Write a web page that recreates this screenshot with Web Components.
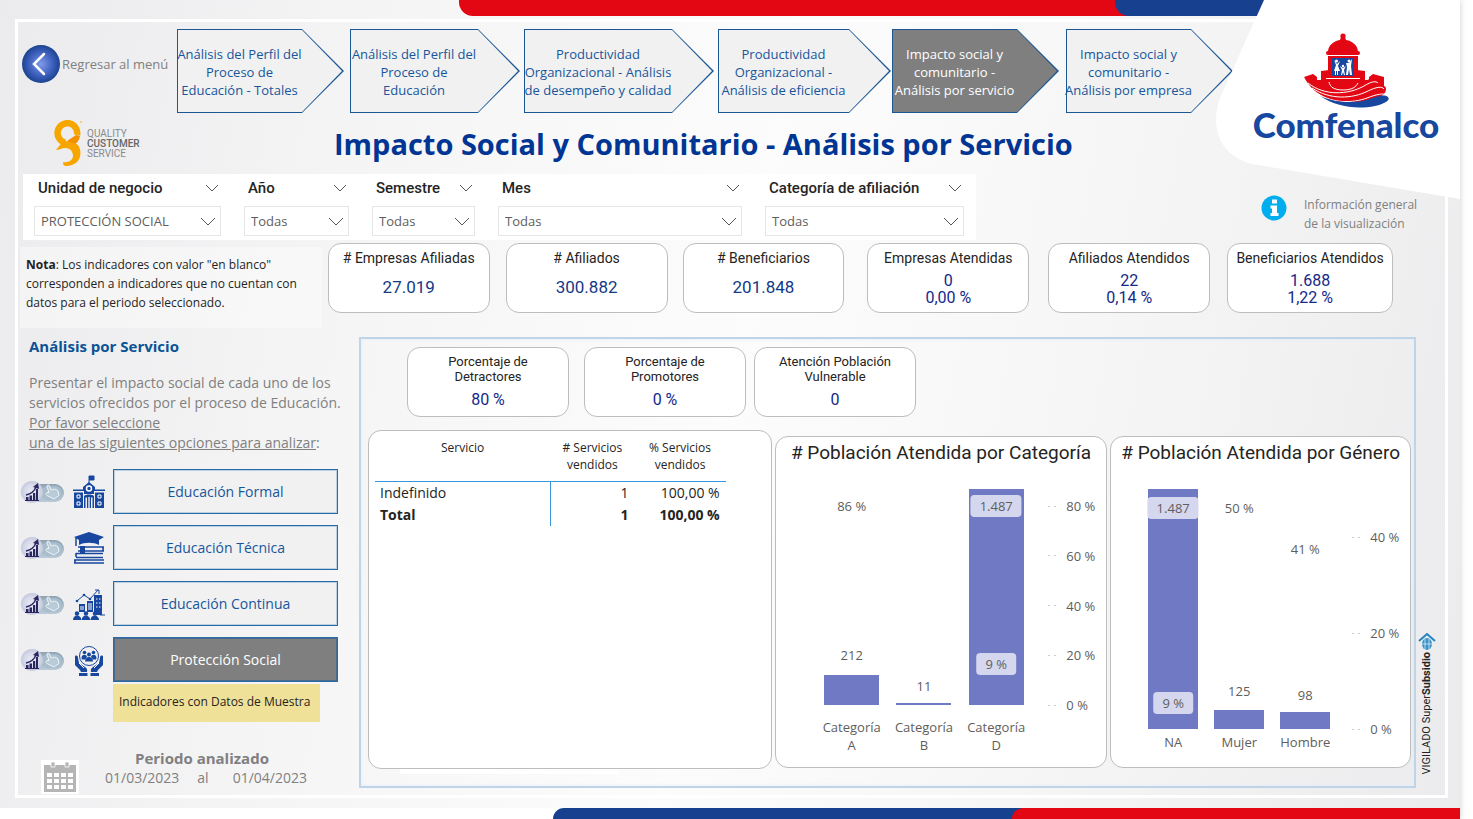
<!DOCTYPE html>
<html lang="es">
<head>
<meta charset="utf-8">
<title>Impacto Social y Comunitario - Análisis por Servicio</title>
<style>
  html, body { margin: 0; padding: 0; background: #fff; }
  body { font-family: "Open Sans", "Noto Sans", sans-serif; color: #252423; }
</style>
</head>
<body>
<impact-dashboard></impact-dashboard>

<script>
const BASE = `*{box-sizing:border-box}:host([hidden]){display:none}`;
function define(name, css, html) {
  customElements.define(name, class extends HTMLElement {
    constructor() {
      super();
      const root = this.attachShadow({ mode: 'open' });
      const markup = typeof html === 'function' ? html(this) : html;
      root.innerHTML = `<style>${BASE}${css}</style>${markup}`;
    }
  });
}

/* ---------- Brand ---------- */
define('brand-corner', `
  :host{display:block;width:244px;height:200px}
  svg.bg{display:block;width:244px;height:200px}
  .mark{position:absolute;left:74px;top:25px}
  .name{position:absolute;left:0;right:0;top:102px;padding-left:16px;text-align:center;font:900 35px/44px Lato,sans-serif;color:#17479e}
`, `
  <svg class="bg" viewBox="0 0 244 200" aria-hidden="true">
    <path d="M48 0H244V199L42 165C8 160 -8 132 4 98Z" fill="#fff"/>
  </svg>
  <svg class="mark" width="110" height="90" viewBox="0 0 110 90" aria-hidden="true">
    <g fill="#e30613">
      <circle cx="53" cy="11" r="2.6"/>
      <path d="M51 12h4l1 3c7 1 12 6 12 12H38c0-6 5-11 12-12z"/>
      <rect x="36" y="26" width="34" height="4" rx="2"/>
      <path d="M38 31h30v22H38z"/>
      <path d="M14 52l9-3 4 3v3h4V46l8-1v8h28v-8l8 1v9h4v-3l4-3 11 3v11L60 74 30 66z"/>
      <path d="M14 52c10 9 30 13 46 9 12-3 20-9 27-7 2 4-2 8-7 10 6-3 16-6 16 0 0 8-14 14-38 14C34 77 20 64 14 52z"/>
    </g>
    <path d="M42 33h22v18H42z" fill="#17479e"/>
    <g fill="#fff">
      <circle cx="46.500" cy="36" r="1.500"/><path d="M44 35l3 4 3-3-2 5 2 5h-2v4h-1v-4h-1v4h-1v-4h-1l2-6z"/>
      <circle cx="53" cy="41" r="1.200"/><path d="M50 41l3 2 3-2-2 4 1 5h-1l-1-3-1 3h-1l1-5z"/>
      <circle cx="59" cy="36" r="1.500"/><path d="M56 38l3 0 3-4-1 7 1 9h-2l-1-6-1 6h-2l1-8z"/>
    </g>
    <g fill="none" stroke="#fff">
      <path d="M37 30.500h32M36 53.500h34"/>
      <path d="M39 57c1 5 5 8 14 8s13-3 15-7" />
      <path d="M18 58c16 13 40 12 56 3 8-5 12-5 14-3"/>
      <path d="M22 63c18 12 40 11 56 3 8-4 14-5 16-2"/>
      <path d="M27 68c16 11 36 10 50 5 10-4 17-5 19-3"/>
    </g>
    <path d="M30 71c18 8 38 7 50 3 8-3 14-5 18-2 3 3-4 7-13 9-20 4-40 0-55-10z" fill="#17479e"/>
  </svg>
  <div class="name">Comfenalco</div>
`);

define('quality-seal', `
  :host{display:flex;align-items:center;gap:5px;font:10px/10px Roboto,sans-serif;color:#8a8a8a}
  b{font-weight:500;color:#666}
`, `
  <svg width="28" height="47" viewBox="0 0 28 47" aria-hidden="true">
    <path d="M11 22.500A9.800 9.800 0 1 1 23 15" fill="none" stroke="#f7a600" stroke-width="6.500"/>
    <path d="M22 15l4 1c-1 6-5 9-9 10l-4-5z" fill="#f39200"/>
    <path d="M2 30l8-10c5 3 10 2 14 5 5 7 3 21-12 21-2 0-3-1-3-4 5 1 10-2 10-6 0-5-3-8-8-8-3 0-6 2-9 2z" fill="#f7a600"/>
    <circle cx="27" cy="2" r="1" fill="#f9c65c"/>
  </svg>
  <div>QUALITY<br><b>CUSTOMER</b><br>SERVICE</div>
`);

/* ---------- Navigation ---------- */
define('back-link', `
  :host{display:block}
  a{display:flex;align-items:center;gap:2px;color:#808080;font-size:13px;line-height:18px;text-decoration:none;white-space:nowrap}
  svg{flex:none}
`, `
  <a href="#menu">
    <svg width="38" height="38" viewBox="0 0 38 38" aria-hidden="true">
      <defs><radialGradient id="g"><stop offset="0" stop-color="#7f9aea"/><stop offset=".6" stop-color="#3f62c0"/><stop offset="1" stop-color="#1b4290"/></radialGradient></defs>
      <circle cx="19" cy="19" r="19" fill="url(#g)"/>
      <path d="M22 9L12 19l10 10" fill="none" stroke="#fff" stroke-width="2.500" stroke-linecap="round"/>
    </svg>
    <slot></slot>
  </a>
`);

define('step-arrow', `
  :host{display:block;--tip:42px;--fill:#f1f1f2;color:#17569a}
  :host([current]){--fill:#7f7f7f;color:#fff}
  a{display:grid;height:84px;color:inherit;text-decoration:none}
  a>*{grid-area:1/1;min-width:0}
  .edge{background:#1a5794;clip-path:polygon(0 0,calc(100% - var(--tip)) 0,100% 50%,calc(100% - var(--tip)) 100%,0 100%)}
  .fill{background:var(--fill);clip-path:polygon(1px 1px,calc(100% - var(--tip)) 1px,calc(100% - 2px) 50%,calc(100% - var(--tip)) calc(100% - 1px),1px calc(100% - 1px))}
  .text{position:relative;display:flex;flex-direction:column;align-items:center;justify-content:center;padding:2px var(--tip) 0 0;
    text-align:center;white-space:nowrap;font-size:13px;line-height:18px}
`, `<a href="#paso"><span class="edge"></span><span class="fill"></span><span class="text"><span><slot></slot></span></span></a>`);

/* ---------- Filters ---------- */
define('filter-box', `
  :host{display:block;background:#fff;padding:4px 12px 6px 11px;height:66px}
  .head{display:flex;align-items:center;justify-content:space-between;height:20px;padding:0 2px 0 4px;margin-bottom:8px}
  label{font:500 15px/20px Roboto,sans-serif;color:#252423;white-space:nowrap}
  button{border:0;background:none;padding:0;height:14px;line-height:0}
  .box{display:grid;height:30px}
  select{grid-area:1/1;appearance:none;border:1px solid #e6e6e6;border-radius:0;background:#fff;padding:0 6px;font:13px/20px "Open Sans",sans-serif;color:#605e5c;width:100%;min-width:0}
  .box svg{grid-area:1/1;justify-self:end;align-self:center;margin-right:5px;pointer-events:none}
`, el => `
  <div class="head"><label for="s">${el.getAttribute('label')}</label>
  <button type="button" aria-label="Contraer"><svg width="14" height="8" viewBox="0 0 14 8"><path d="M1 1l6 6 6-6" fill="none" stroke="#555"/></svg></button></div>
  <div class="box"><select id="s"><option>${el.getAttribute('value')}</option></select>
  <svg width="16" height="9" viewBox="0 0 16 9"><path d="M1 1l7 7 7-7" fill="none" stroke="#555"/></svg></div>
`);

define('info-note', `
  :host{display:flex;gap:17px;align-items:flex-start;color:#808080;font-size:12px;line-height:19px;white-space:nowrap}
  svg{flex:none}
`, `
  <svg width="26" height="26" viewBox="0 0 26 26" aria-hidden="true"><circle cx="13" cy="13" r="12.500" fill="#00aeef"/>
  <path d="M11 4.500h5v4h-5zM9.500 10.500H16V18h1.500v3h-8v-3H11v-4.500H9.500z" fill="#fff"/></svg>
  <div><slot></slot></div>
`);

/* ---------- Indicators ---------- */
define('kpi-card', `
  :host{display:flex;flex-direction:column;align-items:center;height:70px;padding-top:6px;background:#fff;border:1px solid #bdbdbd;border-radius:13px;
    text-align:center;font:14px/16px Roboto,sans-serif;white-space:nowrap}
  .v{color:#15298a;font-size:16px;line-height:17px;padding-top:6px}
  :host([single]) .v{font-size:17px;line-height:20px;padding-top:11px;color:#123a86}
  :host([compact]) .t{font-size:13px;line-height:15px}
  :host([compact]) .v{padding-top:7px}
`, `<div class="t"><slot name="title"></slot></div><div class="v"><slot></slot></div>`);

/* ---------- Sidebar ---------- */
define('mode-toggle', `
  :host{display:block;width:44px;height:24px}
`, `
  <svg width="44" height="24" viewBox="0 0 44 24" aria-hidden="true">
    <defs>
      <radialGradient id="a"><stop offset="0" stop-color="#ededf8"/><stop offset=".7" stop-color="#d5d8ea"/><stop offset="1" stop-color="#c3c8dc"/></radialGradient>
      <linearGradient id="b" x2="0" y2="1"><stop offset="0" stop-color="#8ea3b3"/><stop offset="1" stop-color="#b8cbd9"/></linearGradient>
    </defs>
    <rect x="8" y="4" width="35" height="18" rx="9" fill="url(#b)"/>
    <rect x="20" y="6" width="21" height="14" rx="7" fill="#a9bdcb"/>
    <circle cx="11" cy="12" r="11" fill="url(#a)"/>
    <path d="M5 20v-3h2.500v3zM8.500 20v-4.500H11V20zM12 20v-7h2.200v7zM15 20V9h2v11z" fill="#29275e"/>
    <path d="M5 15c5-1 8-3 10-8" fill="none" stroke="#29275e" stroke-width="1.500"/><path d="M12 7l5-4 1 6z" fill="#29275e"/><path d="M4 20.500h14" stroke="#29275e"/>
    <path d="M28 12.500l-2-6c0-2 2-2 2.500-.5l1.500 4c2-1.500 6-1 7 1l1 4.500-5 3.500-6-3c-2-1-3-2-1-3.500z" fill="#b9cbd8" stroke="#edf4f9" stroke-width="1"/>
  </svg>
`);

const SERVICE_ICONS = {
  school: `<path d="M16 1v7M16 1h5v4h-5" fill="#17479e" stroke="#17479e" stroke-width="1"/>
    <path d="M16 7l6 5v3H10v-3zM0 14.500h32V16H0zM1 17.500h9V33H1zM22 17.500h9V33h-9zM11 15h10v4H11zM11 21c2-2 8-2 10 0v12h-1.500V22.500h-1.500V33h-1.300V22h-1.400v11H14V22.500h-1.500V33H11z" fill="#17479e"/>
    <circle cx="16" cy="13.500" r="2.500" fill="#17479e" stroke="#fff" stroke-width="1.500"/>
    <path d="M4 20h3v3H4zM4 27h3v3H4zM25 20h3v3h-3zM25 27h3v3h-3z" fill="#17479e" stroke="#fff"/>`,
  books: `<path d="M1 6l15-5 15 5-5 3v5c-5-3-15-3-20 0V9z" fill="#17479e"/><path d="M3 7v8" stroke="#17479e" stroke-width="1.500"/>
    <path d="M5 16h26M5 20h26M30 16v4M3 22.500h27M3 26.500h27M3 22v4M1 29h30M1 32h30M2 29v3" stroke="#17479e" stroke-width="1.600" fill="none"/>
    <path d="M7 15h5v8l-2-1-3 1z" fill="#17479e"/>`,
  growth: `<path d="M4 14l7-6 6 4 8-9" fill="none" stroke="#17479e"/><path d="M22 3h4v4" fill="none" stroke="#17479e"/><circle cx="4" cy="14" r="1.300" fill="#17479e"/><circle cx="11" cy="8" r="1.300" fill="#17479e"/><circle cx="17" cy="12" r="1.300" fill="#17479e"/>
    <path d="M6 17h6v8H6zM14 14h6v11h-6zM21 8h8v20h-8z" fill="#17479e"/><path d="M8 19v4M10 19v4M16 16v7M18 16v7M23 12h1.500M26 12h1.500M23 16h1.500M26 16h1.500M23 20h1.500M26 20h1.500" stroke="#fff"/>
    <path d="M0 33c0-6 8-6 8.500 0M8.800 33c0-6 8-6 8.500 0M17.600 33c0-6 8-6 8.500 0" fill="#17479e"/><circle cx="4" cy="26.500" r="2.200" fill="#17479e"/><circle cx="13" cy="26.500" r="2.200" fill="#17479e"/><circle cx="22" cy="26.500" r="2.200" fill="#17479e"/><path d="M27 28h5" stroke="#17479e"/>`,
  care: `<circle cx="16" cy="13" r="9.500" fill="none" stroke="#17479e"/>
    <g fill="#17479e"><circle cx="11.500" cy="9.500" r="1.800"/><circle cx="20.500" cy="9.500" r="1.800"/><circle cx="16" cy="11.500" r="2"/><path d="M8.500 15c0-4 5-4 5.500-1l-2 2.500H9zM23.500 15c0-4-5-4-5.500-1l2 2.500h3zM12 18.500c0-6 8-6 8 0z"/>
    <path d="M2 13c2-1 3 0 3 2l1 5 6 4c3 2 2 4 2 5H8l-1-2-5-5zM30 13c-2-1-3 0-3 2l-1 5-6 4c-3 2-2 4-2 5h6l1-2 5-5zM6 30h8.500v3H6zM17.500 30H26v3h-8.500z"/></g>
    <path d="M6 20l5 5M26 20l-5 5" stroke="#fff"/>`
};

define('service-option', `
  :host{display:grid;grid-template-columns:44px 34px 1fr;align-items:center;column-gap:7px;--c:#17569a;--fill:#f1f1f2}
  :host([current]){--fill:#7f7f7f;--c:#fff}
  .i{justify-self:center;line-height:0}
  button{height:45px;border:1px solid #2a6aa5;outline:1px solid #b8cfe4;outline-offset:-2px;background:var(--fill);color:var(--c);font:14px/20px "Open Sans",sans-serif;padding:0;width:100%}
  :host([current]) button{outline-color:#456b90}
`, el => `
  <mode-toggle></mode-toggle>
  <svg class="i" width="32" height="34" viewBox="0 0 32 34" aria-hidden="true">${SERVICE_ICONS[el.getAttribute('icon')]}</svg>
  <button type="button"><slot></slot></button>
`);

define('analysis-period', `
  :host{display:flex;align-items:flex-end;gap:26px;color:#808080}
  .cal{flex:none;background:#fff;line-height:0;padding:2px}
  .t{font:700 15px/20px "Open Sans",sans-serif;text-align:center;padding-right:8px}
  .d{display:flex;gap:18px;font-size:14px;line-height:20px;padding-bottom:6px}
  .to{padding-left:6px}
`, `
  <div class="cal"><svg width="34" height="30" viewBox="0 0 34 30" aria-hidden="true">
    <path d="M1 3h32v27H1z" fill="#b5b5b5"/><path d="M8 0h4v5H8zM22 0h4v5h-4z" fill="#b5b5b5" stroke="#fff" stroke-width=".8"/>
    <path d="M4 11h5v4H4zM11 11h5v4h-5zM18 11h5v4h-5zM25 11h5v4h-5zM4 17h5v4H4zM11 17h5v4h-5zM18 17h5v4h-5zM25 17h5v4h-5zM4 23h5v4H4zM11 23h5v4h-5zM18 23h5v4h-5zM25 23h5v4h-5z" fill="#fff"/>
  </svg></div>
  <div><div class="t">Periodo analizado</div><div class="d"><span>01/03/2023</span><span>al</span><span class="to">01/04/2023</span></div></div>
`);

/* ---------- Table ---------- */
define('service-table', `
  :host{display:block;background:#fff;border:1px solid #bdbdbd;border-radius:13px;padding:7px 6px;height:339px}
  table{border-collapse:collapse;width:90%;table-layout:fixed;color:#252423}
  col.a{width:50%}col.b{width:24%}
  th{font-size:12px;line-height:17px;font-weight:400;vertical-align:top;padding:1px 0 8px;height:43px;border-bottom:1px solid #3a96dd}
  td{font-size:14px;line-height:22px;padding:0 6px 0 5px;text-align:right}
  td:first-child{text-align:left;border-right:1px solid #3a96dd}
  tfoot td{font-weight:700}
`, `
  <table>
    <colgroup><col class="a"><col class="b"><col></colgroup>
    <thead><tr><th scope="col">Servicio</th><th scope="col"># Servicios<br>vendidos</th><th scope="col">% Servicios<br>vendidos</th></tr></thead>
    <tbody><tr><td>Indefinido</td><td>1</td><td>100,00 %</td></tr></tbody>
    <tfoot><tr><td>Total</td><td>1</td><td>100,00 %</td></tr></tfoot>
  </table>
`);

/* ---------- Bar chart: data comes from a JSON attribute ---------- */
define('bar-chart', `
  :host{display:block;background:#fff;border:1px solid #bdbdbd;border-radius:13px;height:332px;padding-top:5px}
  h2{margin:0 0 25px;font:400 19px/22px Roboto,sans-serif;color:#252423;text-align:center;white-space:nowrap}
  .body{display:grid;font-size:13px;line-height:18px;color:#605e5c}
  .plot{position:relative;display:grid;grid-auto-flow:column;grid-auto-columns:1fr;justify-items:center;align-items:end}
  .col{position:relative;width:76%;height:100%;display:flex;align-items:flex-end}
  .bar{width:100%;background:#7079c4}
  .lab{position:absolute;left:50%;transform:translate(-50%,50%);white-space:nowrap}
  .pill{background:#d5d7ee;border-radius:4px;padding:2px 9px}
  .axis{position:relative}
  .tick{position:absolute;left:0;transform:translateY(50%);display:flex;gap:9px;white-space:nowrap}
  .tick::before{content:"";width:9px;height:1px;align-self:center;background:linear-gradient(90deg,#ccc 2px,transparent 2px 6px,#ccc 6px 8px,transparent 8px)}
  .cats{display:grid;grid-auto-flow:column;grid-auto-columns:1fr;text-align:center;padding-top:var(--cat-gap)}
`, el => {
  const d = JSON.parse(el.getAttribute('data'));
  const cols = d.bars.map(b => `<div class="col"><div class="bar" style="height:${b.h}%"></div>${
    b.labels.map(l => `<span class="lab ${l.pill ? 'pill' : ''}" style="bottom:${l.at}%">${l.text}</span>`).join('')}</div>`).join('');
  const ticks = d.ticks.map(t => `<div class="tick" style="bottom:${t.at}%">${t.text}</div>`).join('');
  return `<h2>${d.title}</h2>
  <div class="body" style="grid-template-columns:${d.columns};grid-template-rows:${d.plot}px auto;--cat-gap:${d.gap}px">
    <span></span><div class="plot">${cols}</div><span></span><div class="axis">${ticks}</div>
    <span></span><div class="cats">${d.bars.map(b => `<div>${b.name}</div>`).join('')}</div>
  </div>`;
});

/* ---------- Supervision seal ---------- */
define('supervision-seal', `
  :host{display:flex;flex-direction:column;align-items:center;gap:2px}
  .t{writing-mode:vertical-rl;transform:rotate(180deg);font:400 11px/12px Roboto,sans-serif;color:#222;white-space:nowrap}
  b{font-weight:700}
`, `
  <svg width="18" height="18" viewBox="0 0 18 18" aria-hidden="true"><path d="M1 9l8-7 8 7" fill="none" stroke="#2384c0" stroke-width="2"/>
  <ellipse cx="9" cy="12" rx="5" ry="6" fill="#3c92c8"/><path d="M7 7v11M11 7v11M4 12h10" stroke="#d9ecf7" stroke-width=".8"/></svg>
  <div class="t">VIGILADO Super<b>Subsidio</b></div>
`);

/* ---------- Page ---------- */
const chartCategory = JSON.stringify({
  title: '# Población Atendida por Categoría', plot: 216, gap: 13, columns: '40fr 217fr 16fr 58fr',
  bars: [
    { name: 'Categoría<br>A', h: 14, labels: [{ text: '86 %', at: 92 }, { text: '212', at: 23 }] },
    { name: 'Categoría<br>B', h: 1, labels: [{ text: '11', at: 9 }] },
    { name: 'Categoría<br>D', h: 100, labels: [{ text: '1.487', at: 92, pill: 1 }, { text: '9 %', at: 19, pill: 1 }] }
  ],
  ticks: [[80, 92], [60, 69], [40, 46], [20, 23], [0, 0]].map(([n, at]) => ({ text: n + ' %', at }))
});
const chartGender = JSON.stringify({
  title: '# Población Atendida por Género', plot: 240, gap: 4, columns: '29fr 199fr 14fr 58fr',
  bars: [
    { name: 'NA', h: 100, labels: [{ text: '1.487', at: 92, pill: 1 }, { text: '9 %', at: 11, pill: 1 }] },
    { name: 'Mujer', h: 8, labels: [{ text: '50 %', at: 92 }, { text: '125', at: 16 }] },
    { name: 'Hombre', h: 7, labels: [{ text: '41 %', at: 75 }, { text: '98', at: 14 }] }
  ],
  ticks: [[40, 80], [20, 40], [0, 0]].map(([n, at]) => ({ text: n + ' %', at }))
});

define('impact-dashboard', `
  :host{display:block}
  .page{position:relative;margin-right:13px;min-height:100vh;display:flex;flex-direction:column;
    background:linear-gradient(100deg,#ebebed 0%,#f5f5f6 25%,#fcfcfc 50%,#f6f6f6 72%,#ebebed 100%);box-shadow:0 0 6px #ccc}
  .top{display:grid;grid-template-columns:459fr 656fr 345fr;height:16px}
  .top .r{background:#e30613;border-radius:0 0 0 14px;grid-column:2}
  .top .wrap{background:#e30613}
  .top .b{background:#17418f;border-radius:0 0 0 14px;height:16px}
  .bottom{display:grid;grid-template-columns:553fr 459fr 448fr;height:11px;background:#fff}
  .bottom .b{background:#17418f;border-radius:12px 0 0 0}
  .bottom .wrap{background:#17418f}
  .bottom .r{background:#e30613;height:11px;border-radius:12px 0 0 0}
  brand-corner{position:absolute;right:0;top:0}
  .frame{margin:3px 12px 10px 15px;border:3px solid #fff;flex:1}
  nav{display:grid;grid-template-columns:4fr 155fr 167fr 6fr 170fr 4fr 190fr 4fr 173fr 1fr 167fr 7fr 167fr 212fr;padding-top:7px;height:91px}
  nav>*{grid-row:1;min-width:0}
  nav>:nth-child(1){grid-column:2}
  nav>:nth-child(2){grid-column:3}
  nav>:nth-child(3){grid-column:5}
  nav>:nth-child(4){grid-column:7}
  nav>:nth-child(5){grid-column:9}
  nav>:nth-child(6){grid-column:11}
  nav>:nth-child(7){grid-column:13}
  nav back-link{padding-top:16px}
  .title{display:flex;align-items:center;height:61px;padding:0 178px 0 36px}
  h1{flex:1;margin:0;text-align:center;font-size:29px;line-height:36px;font-weight:700;color:#003594;white-space:nowrap}
  .filters{display:grid;grid-template-columns:5fr 210fr 128fr 126fr 267fr 222fr 285fr 184fr}
  .filters filter-box:first-child{grid-column:2}
  info-note{grid-column:8;padding-top:21px}
  .kpis{display:grid;grid-template-columns:310fr 162fr 16fr 162fr 15fr 162fr 23fr 162fr 19fr 162fr 17fr 166fr 52fr;padding-top:3px;height:97px;align-items:start}
  .kpis>*{grid-row:1;min-width:0}
  .kpis>:nth-child(2){grid-column:2}
  .kpis>:nth-child(3){grid-column:4}
  .kpis>:nth-child(4){grid-column:6}
  .kpis>:nth-child(5){grid-column:8}
  .kpis>:nth-child(6){grid-column:10}
  .kpis>:nth-child(7){grid-column:12}
  .note{margin:4px 6px 0 2px;padding:8px 6px;height:81px;background:rgba(255,255,255,.4);font-size:12px;line-height:19px;white-space:nowrap}
  .main{display:grid;grid-template-columns:minmax(0,341fr) minmax(0,1057fr) minmax(0,29fr);min-height:458px}
  aside{padding:0 21px 0 3px;display:flex;flex-direction:column}
  aside h2{margin:0 0 18px 8px;font:700 15px/18px "Open Sans",sans-serif;color:#0b5394}
  aside p{margin:0 0 16px 8px;font:14px/20px "Open Sans",sans-serif;color:#808080;white-space:nowrap}
  .opts{display:flex;flex-direction:column;gap:11px}
  .tag{align-self:flex-start;margin:2px 0 0 92px;width:207px;max-width:100%;height:38px;padding:9px 6px;background:#f0e199;font-size:12px;line-height:18px;white-space:nowrap}
  analysis-period{margin:26px 0 0 20px}
  .panel{margin-bottom:7px;border:2px solid #c0d4e8;box-shadow:inset 0 0 4px #e3eefa;padding:8px 3px 0 7px}
  .small{display:grid;grid-template-columns:39fr 162fr 15fr 162fr 8fr 162fr 495fr;height:83px}
  .small>*{grid-row:1}
  .small>:nth-child(1){grid-column:2}
  .small>:nth-child(2){grid-column:4}
  .small>:nth-child(3){grid-column:6}
  .charts{display:grid;grid-template-columns:404fr 333fr 301fr;column-gap:3px;align-items:start}
  .charts bar-chart{margin-top:6px}
  .strip{margin:0 0 0 32px;width:21%;height:5px;background:#fff}
  supervision-seal{align-self:end;padding-bottom:20px;margin-right:8px}
`, `
  <div class="page">
    <div class="top"><div class="r"></div><div class="wrap"><div class="b"></div></div></div>
    <div class="frame">
      <nav>
        <back-link>Regresar al menú</back-link>
        <step-arrow>Análisis del Perfil del<br>Proceso de<br>Educación - Totales</step-arrow>
        <step-arrow>Análisis del Perfil del<br>Proceso de<br>Educación</step-arrow>
        <step-arrow>Productividad<br>Organizacional - Análisis<br>de desempeño y calidad</step-arrow>
        <step-arrow>Productividad<br>Organizacional -<br>Análisis de eficiencia</step-arrow>
        <step-arrow current>Impacto social y<br>comunitario -<br>Análisis por servicio</step-arrow>
        <step-arrow>Impacto social y<br>comunitario -<br>Análisis por empresa</step-arrow>
      </nav>
      <div class="title"><quality-seal></quality-seal><h1>Impacto Social y Comunitario - Análisis por Servicio</h1></div>
      <div class="filters">
        <filter-box label="Unidad de negocio" value="PROTECCIÓN SOCIAL"></filter-box>
        <filter-box label="Año" value="Todas"></filter-box>
        <filter-box label="Semestre" value="Todas"></filter-box>
        <filter-box label="Mes" value="Todas"></filter-box>
        <filter-box label="Categoría de afiliación" value="Todas"></filter-box>
        <info-note>Información general<br>de la visualización</info-note>
      </div>
      <div class="kpis">
        <div class="note"><b>Nota</b>: Los indicadores con valor "en blanco"<br>corresponden a indicadores que no cuentan con<br>datos para el periodo seleccionado.</div>
        <kpi-card single><span slot="title"># Empresas Afiliadas</span>27.019</kpi-card>
        <kpi-card single><span slot="title"># Afiliados</span>300.882</kpi-card>
        <kpi-card single><span slot="title"># Beneficiarios</span>201.848</kpi-card>
        <kpi-card><span slot="title">Empresas Atendidas</span>0<br>0,00 %</kpi-card>
        <kpi-card><span slot="title">Afiliados Atendidos</span>22<br>0,14 %</kpi-card>
        <kpi-card><span slot="title">Beneficiarios Atendidos</span>1.688<br>1,22 %</kpi-card>
      </div>
      <div class="main">
        <aside>
          <h2>Análisis por Servicio</h2>
          <p>Presentar el impacto social de cada uno de los<br>servicios ofrecidos por el proceso de Educación.<br><u>Por favor seleccione</u><br><u>una de las siguientes opciones para analizar</u>:</p>
          <div class="opts">
            <service-option icon="school">Educación Formal</service-option>
            <service-option icon="books">Educación Técnica</service-option>
            <service-option icon="growth">Educación Continua</service-option>
            <service-option icon="care" current>Protección Social</service-option>
          </div>
          <div class="tag">Indicadores con Datos de Muestra</div>
          <analysis-period></analysis-period>
        </aside>
        <section class="panel">
          <div class="small">
            <kpi-card compact><span slot="title">Porcentaje de<br>Detractores</span>80 %</kpi-card>
            <kpi-card compact><span slot="title">Porcentaje de<br>Promotores</span>0 %</kpi-card>
            <kpi-card compact><span slot="title">Atención Población<br>Vulnerable</span>0</kpi-card>
          </div>
          <div class="charts">
            <service-table></service-table>
            <bar-chart data='${chartCategory}'></bar-chart>
            <bar-chart data='${chartGender}'></bar-chart>
          </div>
          <div class="strip"></div>
        </section>
        <supervision-seal></supervision-seal>
      </div>
    </div>
    <div class="bottom"><div></div><div class="b"></div><div class="wrap"><div class="r"></div></div></div>
    <brand-corner></brand-corner>
  </div>
`);
</script>
</body>
</html>
